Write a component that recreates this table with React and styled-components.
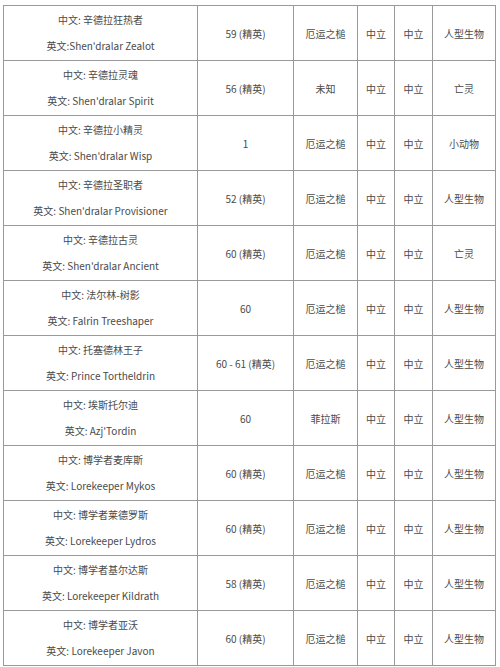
import React from 'react';
import styled, { createGlobalStyle } from 'styled-components';

const GlobalStyle = createGlobalStyle`
  html, body {
    margin: 0;
    padding: 0;
    background: #fff;
  }
`;

const Page = styled.div`
  padding: 5px 5px 0 3px;
  font-family: "Noto Sans CJK SC", "Noto Sans", sans-serif;
  color: #4a4a4a;
`;

const Table = styled.table`
  width: 492px;
  table-layout: fixed;
  border-collapse: collapse;
  font-size: 10px;
`;

const Col = styled.col`
  width: ${props => props.$w}px;
`;

const Cell = styled.td`
  height: 54px;
  padding: 0;
  border: 1px solid #9a9a9a;
  text-align: center;
  vertical-align: middle;
`;

const NameLine = styled.div`
  line-height: 26px;
  white-space: nowrap;
`;

const colWidths = [194, 96, 64, 37, 38, 63];

const rows = [
  ['辛德拉狂热者', "英文:Shen'dralar Zealot", '59 (精英)', '厄运之槌', '人型生物'],
  ['辛德拉灵魂', "英文: Shen'dralar Spirit", '56 (精英)', '未知', '亡灵'],
  ['辛德拉小精灵', "英文: Shen'dralar Wisp", '1', '厄运之槌', '小动物'],
  ['辛德拉圣职者', "英文: Shen'dralar Provisioner", '52 (精英)', '厄运之槌', '人型生物'],
  ['辛德拉古灵', "英文: Shen'dralar Ancient", '60 (精英)', '厄运之槌', '亡灵'],
  ['法尔林-树影', '英文: Falrin Treeshaper', '60', '厄运之槌', '人型生物'],
  ['托塞德林王子', '英文: Prince Tortheldrin', '60 - 61 (精英)', '厄运之槌', '人型生物'],
  ['埃斯托尔迪', "英文: Azj'Tordin", '60', '菲拉斯', '人型生物'],
  ['博学者麦库斯', '英文: Lorekeeper Mykos', '60 (精英)', '厄运之槌', '人型生物'],
  ['博学者莱德罗斯', '英文: Lorekeeper Lydros', '60 (精英)', '厄运之槌', '人型生物'],
  ['博学者基尔达斯', '英文: Lorekeeper Kildrath', '58 (精英)', '厄运之槌', '人型生物'],
  ['博学者亚沃', '英文: Lorekeeper Javon', '60 (精英)', '厄运之槌', '人型生物'],
];

export default function App() {
  return (
    <Page>
      <GlobalStyle />
      <Table>
        <colgroup>
          {colWidths.map((w, i) => (
            <Col key={i} $w={w} />
          ))}
        </colgroup>
        <tbody>
          {rows.map((r, i) => (
            <tr key={i}>
              <Cell>
                <NameLine>中文: {r[0]}</NameLine>
                <NameLine>{r[1]}</NameLine>
              </Cell>
              <Cell>{r[2]}</Cell>
              <Cell>{r[3]}</Cell>
              <Cell>中立</Cell>
              <Cell>中立</Cell>
              <Cell>{r[4]}</Cell>
            </tr>
          ))}
        </tbody>
      </Table>
    </Page>
  );
}
